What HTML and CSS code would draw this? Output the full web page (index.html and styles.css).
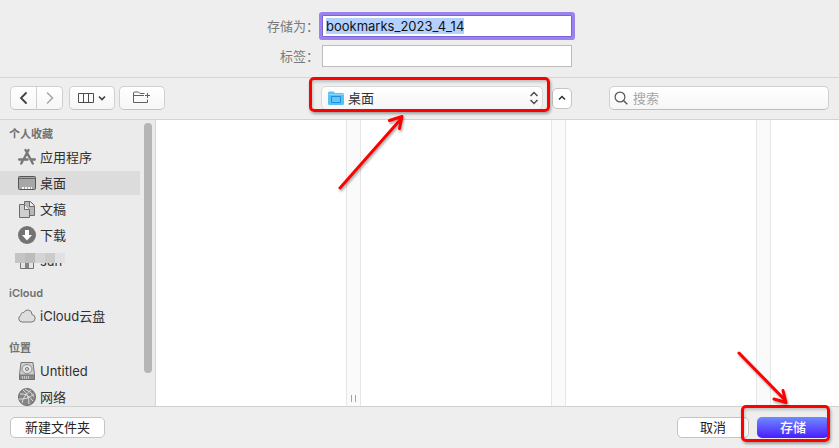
FILE: index.html
```html
<!DOCTYPE html>
<html lang="zh-CN">
<head>
<meta charset="utf-8">
<title>存储</title>
<link rel="stylesheet" href="styles.css">
</head>
<body>
<form class="dialog">
  <header class="fields">
    <label for="name">存储为：</label>
    <input class="field field-name" id="name" type="text" value="bookmarks_2023_4_14" autocomplete="off" spellcheck="false" autofocus>
    <label for="tags">标签：</label>
    <input class="field" id="tags" type="text" autocomplete="off">
  </header>

  <div class="toolbar">
    <div class="tools">
      <div class="segmented">
        <button type="button" class="tool" aria-label="后退"><svg width="10" height="14" viewBox="0 0 10 14"><path d="M7 2 2 7l5 5" fill="none" stroke="#404040" stroke-width="1.8" stroke-linecap="round"/></svg></button>
        <button type="button" class="tool" aria-label="前进"><svg width="10" height="14" viewBox="0 0 10 14"><path d="m2.5 2 5 5-5 5" fill="none" stroke="#a8a8a8" stroke-width="1.6" stroke-linecap="round"/></svg></button>
      </div>
      <button type="button" class="tool tool-wide" aria-label="显示方式"><svg width="28" height="12" viewBox="0 0 28 12"><path d="M.5 1.5h15v9H.5zM5.5 1.5v9M10.5 1.5v9" fill="none" stroke="#4c4c4c"/><path d="m21 4.500 3 3 3-3" fill="none" stroke="#404040" stroke-width="1.6"/></svg></button>
      <button type="button" class="tool tool-wide" aria-label="新建文件夹"><svg width="18" height="14" viewBox="0 0 18 14"><path d="M11.500 2.500H7L5.500 1H1.500Q.5 1 .5 2v9.500h14V8.500M.5 4.500H11M14.500 2v5M12 4.500h5" fill="none" stroke="#606060"/></svg></button>
    </div>
    <div class="location">
      <div class="popup">
        <svg class="folder" width="16" height="14" viewBox="0 0 16 14"><path d="M0 2q0-1.500 1.500-1.500h4L7 2h7.500Q16 2 16 3.500v9q0 1.500-1.500 1.500h-13Q0 14 0 12.500z" fill="#59c1f5"/><path d="M.5 3.500h15" stroke="#8bd8fb"/><path d="M3.500 5.500h9v6h-9z" fill="#63c7f8" stroke="#1f8fdc"/></svg>
        <select class="folder-select" aria-label="位置"><option>桌面</option></select>
        <svg class="updown" width="8" height="14" viewBox="0 0 8 14"><path d="m.5 5 3.500-3.500L7.500 5M.5 9 4 12.500 7.500 9" fill="none" stroke="#4a4a4a" stroke-width="1.500"/></svg>
        <span class="mark mark-popup"></span>
        <svg class="arrow arrow-popup" width="76" height="86" viewBox="0 0 76 86"><path d="M5 79 65 11M54.500 11.500 67 7.500l-2.500 12" fill="none" stroke="#f00" stroke-width="3" stroke-linecap="round" stroke-linejoin="round"/></svg>
      </div>
      <button type="button" class="collapse" aria-label="收起"><svg width="8" height="6" viewBox="0 0 8 6"><path d="m1 4.500 3-3 3 3" fill="none" stroke="#303030" stroke-width="1.500"/></svg></button>
    </div>
    <div class="search">
      <svg width="14" height="14" viewBox="0 0 14 14"><circle cx="6" cy="6" r="4.900" fill="none" stroke="#555" stroke-width="1.200"/><path d="m9.500 9.500 3.800 3.800" stroke="#555" stroke-width="1.400"/></svg>
      <input type="search" placeholder="搜索" aria-label="搜索">
    </div>
  </div>

  <main class="browser">
    <nav class="sidebar">
      <section>
        <h2>个人收藏</h2>
        <ul>
          <li><svg viewBox="0 0 18 18"><path d="M7.500 2 14.800 15.500M10.500 2 6 10.500M4.500 13.200 3.200 15.500M1.200 11.500h8.300M13 11.500h3.800" fill="none" stroke="#777" stroke-width="2.400" stroke-linecap="round"/></svg>应用程序</li>
          <li class="selected"><svg viewBox="0 0 18 18"><rect x=".5" y="2.500" width="17" height="13" rx="1" fill="#a7a7a7" stroke="#555"/><path d="M1 4.500h16" stroke="#666"/><path d="M4 14h2M7 14h2M10 14h2M13 14h1" stroke="#f4f4f4" stroke-width="2"/></svg>桌面</li>
          <li><svg viewBox="0 0 18 18"><path d="M6.500 1.500h6l4 4v10h-10z" fill="#b8b8b8" stroke="#6b6b6b"/><path d="M11.500 1.500v5h5" fill="#eee" stroke="#6b6b6b"/><path d="M1.500 4.500h5l5 5v8h-10z" fill="#cfcfcf" stroke="#6b6b6b"/><path d="M6.500 4.500v5h5" fill="#f2f2f2" stroke="#6b6b6b"/></svg>文稿</li>
          <li><svg viewBox="0 0 18 18"><circle cx="9" cy="9" r="9" fill="#737373"/><path d="M7 4h4v5h3l-5 5.500L4 9h3z" fill="#fff"/></svg>下载</li>
          <li class="home"><svg viewBox="0 0 18 18"><path d="M.5 9 9 1.500 17.500 9M2.500 8v8.500h13V8" fill="#e4e4e4" stroke="#747474"/><path d="M7 10h4v6H7z" fill="#858585"/></svg>sun
            <span class="mosaic"><i></i><i></i><i></i><i></i><i></i></span></li>
        </ul>
      </section>
      <section>
        <h2>iCloud</h2>
        <ul>
          <li><svg viewBox="0 0 18 18"><path d="M4 15A3.400 3.400 0 0 1 2.800 8.500 2.600 2.600 0 0 1 5.800 5.500 4.300 4.300 0 0 1 14 7.500 3.800 3.800 0 0 1 14 15z" fill="#dedede" stroke="#777"/></svg>iCloud云盘</li>
        </ul>
      </section>
      <section>
        <h2>位置</h2>
        <ul>
          <li><svg viewBox="0 0 18 18"><path d="M3 .5h12l1.500 12v5h-15v-5z" fill="#cfcfcf" stroke="#777"/><ellipse cx="9" cy="7" rx="5" ry="4.500" fill="#e4e4e4" stroke="#8c8c8c"/><circle cx="9" cy="7" r="1.500" fill="none" stroke="#777"/><path d="M1.500 13h15v4.500h-15z" fill="#8a8a8a" stroke="#707070"/><path d="M4.500 14v3M6.500 14v3M8.500 14v3M10.500 14v3" stroke="#c8c8c8"/></svg>Untitled</li>
          <li><svg viewBox="0 0 18 18"><circle cx="9" cy="9" r="8.500" fill="#858585" stroke="#6e6e6e"/><path d="M2 6q7-1 13 7M5 2q6 4 6 14M13 2Q5 8 4 15M1 11q8 1 15-5M7 1q7 3 9 8" fill="none" stroke="#dcdcdc"/></svg>网络</li>
        </ul>
      </section>
      <span class="scroll-thumb"></span>
    </nav>
    <div class="column"></div>
    <div class="gutter"><span class="grip"></span></div>
    <div class="column"></div>
    <div class="gutter"></div>
    <div class="column"></div>
    <div class="gutter"></div>
    <div class="column-last"></div>
  </main>

  <footer class="actions">
    <button type="button" class="button button-new">新建文件夹</button>
    <button type="button" class="button">取消</button>
    <div class="save">
      <button type="submit" class="button button-primary">存储</button>
      <span class="mark mark-save"></span>
      <svg class="arrow arrow-save" width="60" height="64" viewBox="0 0 60 64"><path d="M7 8 52 54M42 54 54 57.500 51 45.500" fill="none" stroke="#f00" stroke-width="3" stroke-linecap="round" stroke-linejoin="round"/></svg>
    </div>
  </footer>
</form>
<script src="script.js"></script>
</body>
</html>
```
FILE: script.js
```js
const nameField = document.getElementById("name");
nameField.focus();
nameField.select();
```
FILE: styles.css
```css
* {
  box-sizing: border-box;
}

body {
  margin: 0;
  background: #eee;
  color: #303030;
  font: 13px/16px Inter, "Noto Sans CJK SC", sans-serif;
}

button,
input,
select {
  margin: 0;
  font: inherit;
  color: inherit;
}

svg {
  display: block;
  flex: none;
}

.dialog {
  display: flex;
  flex-direction: column;
  height: 100vh;
  overflow: hidden;
}

/* Name and tags */

.fields {
  display: grid;
  grid-template-columns: auto 250px;
  justify-content: center;
  align-items: center;
  gap: 8px 3px;
  padding: 15px 0 10px;
  border-bottom: 1px solid #d5d5d5;
}

.fields label {
  color: #7a7a7a;
  text-align: right;
}

.field {
  width: 100%;
  height: 22px;
  padding: 2px 3px;
  border: 1px solid #bcbcbc;
  background: #fff;
  color: #111;
  outline: none;
}

.field-name {
  border-color: #7b62d8;
  box-shadow: 0 0 0 3px #9b83ee;
  border-radius: 1px;
}

.field::selection {
  background: #b3d0fe;
  color: #111;
}

/* Toolbar */

.toolbar {
  display: flex;
  align-items: center;
  padding: 8px 10px 9px;
  border-bottom: 1px solid #d2d2d2;
}

.tools {
  display: flex;
  flex: 1;
  gap: 4px;
}

.segmented {
  display: flex;
  margin-right: 2px;
}

.tool {
  display: flex;
  align-items: center;
  justify-content: center;
  width: 27px;
  height: 24px;
  padding: 0;
  border: 1px solid #d0d0d0;
  border-bottom-color: #c2c2c2;
  border-radius: 5px;
  background: linear-gradient(#fff, #f6f6f6);
}

.segmented .tool:first-child {
  border-radius: 5px 0 0 5px;
}

.segmented .tool:last-child {
  margin-left: -1px;
  border-radius: 0 5px 5px 0;
}

.tool-wide {
  width: 46px;
}

.location {
  display: flex;
  align-items: center;
  gap: 9px;
  width: 251px;
}

.popup {
  position: relative;
  flex: 1;
}

.folder-select {
  display: block;
  width: 100%;
  height: 24px;
  padding: 0 24px 0 26px;
  border: 1px solid #dadada;
  border-radius: 5px;
  background: linear-gradient(#fff, #f5f5f5);
  appearance: none;
}

.folder {
  position: absolute;
  left: 7px;
  top: 5px;
}

.updown {
  position: absolute;
  right: 5px;
  top: 5px;
}

.collapse {
  display: flex;
  align-items: center;
  justify-content: center;
  width: 20px;
  height: 21px;
  padding: 0;
  border: 1px solid #c4c4c4;
  border-radius: 5px;
  background: #fff;
}

.search {
  display: flex;
  align-items: center;
  gap: 5px;
  width: 220px;
  height: 24px;
  margin-left: 37px;
  padding: 0 4px;
  border: 1px solid #d0d0d0;
  border-bottom-color: #bdbdbd;
  border-radius: 5px;
  background: linear-gradient(#fff, #f6f6f6);
}

.search input {
  flex: 1;
  min-width: 0;
  padding: 0;
  border: 0;
  background: none;
  outline: none;
}

.search input::placeholder {
  color: #a6a6a6;
}

/* Browser */

.browser {
  display: flex;
  flex: 1;
  min-height: 0;
  background: #fff;
}

.sidebar {
  position: relative;
  display: flex;
  flex: none;
  flex-direction: column;
  gap: 8px;
  width: 156px;
  padding-top: 4px;
  border-right: 1px solid #d6d6d6;
  background: #ebebeb;
  overflow: hidden;
}

.sidebar h2 {
  margin: 0;
  padding-left: 9px;
  color: #707070;
  font-size: 11px;
  font-weight: 600;
  line-height: 20px;
}

.sidebar ul {
  margin: 0;
  padding: 1px 0 0;
  list-style: none;
}

.sidebar li {
  display: flex;
  align-items: center;
  gap: 4px;
  height: 24px;
  margin: 0 15px 2px 0;
  padding-left: 18px;
}

.sidebar li svg {
  width: 18px;
  height: 18px;
}

.sidebar .selected {
  background: #dcdcdc;
}

.home {
  position: relative;
}

.mosaic {
  position: absolute;
  left: 15px;
  top: 4px;
  display: flex;
  width: 50px;
  height: 10px;
}

.mosaic i {
  flex: 1;
  background: #d4d4d4;
}

.mosaic i:first-child {
  background: #c4c4c4;
}

.mosaic i:nth-child(2) {
  background: #bcbcbc;
}

.mosaic i:nth-child(4) {
  background: #cbcbcb;
}

.mosaic i:last-child {
  background: #e1e1e1;
}

.scroll-thumb {
  position: absolute;
  top: 3px;
  right: 3px;
  width: 8px;
  height: 250px;
  border-radius: 4px;
  background: #b5b5b5;
}

.column {
  flex: 0 0 190px;
}

.column-last {
  flex: 1;
}

.gutter {
  display: flex;
  flex: none;
  align-items: flex-end;
  justify-content: center;
  width: 15px;
  padding-bottom: 4px;
  border: solid #e6e6e6;
  border-width: 0 1px;
  background: #fafafa;
}

.grip {
  width: 5px;
  height: 7px;
  border: solid #a3a3a3;
  border-width: 0 1px;
}

/* Actions */

.actions {
  display: flex;
  gap: 8px;
  padding: 10px;
  border-top: 1px solid #d0d0d0;
}

.button {
  width: 72px;
  height: 21px;
  padding: 0 0 1px;
  border: 1px solid #c4c4c4;
  border-radius: 5px;
  background: #fff;
  color: #222;
}

.button-new {
  width: 95px;
  margin-right: auto;
}

.button-primary {
  border: 0;
  background: linear-gradient(#6f8bff, #4a1cff);
  color: #fff;
  font-weight: 500;
}

.save {
  position: relative;
}

/* Highlights */

.mark {
  position: absolute;
  border: 3px solid #f00;
  border-radius: 5px;
  box-shadow: 1px 2px 3px #0005, inset 1px 2px 3px #0003;
  pointer-events: none;
}

.mark-popup {
  inset: -9px -7px -2px -12px;
}

.mark-save {
  inset: -12px -1px -4px -16px;
}

.arrow {
  position: absolute;
  filter: drop-shadow(1px 2px 1px #0005);
  pointer-events: none;
}

.arrow-popup {
  left: 14px;
  top: 23px;
}

.arrow-save {
  right: 37px;
  bottom: 29px;
}
```
